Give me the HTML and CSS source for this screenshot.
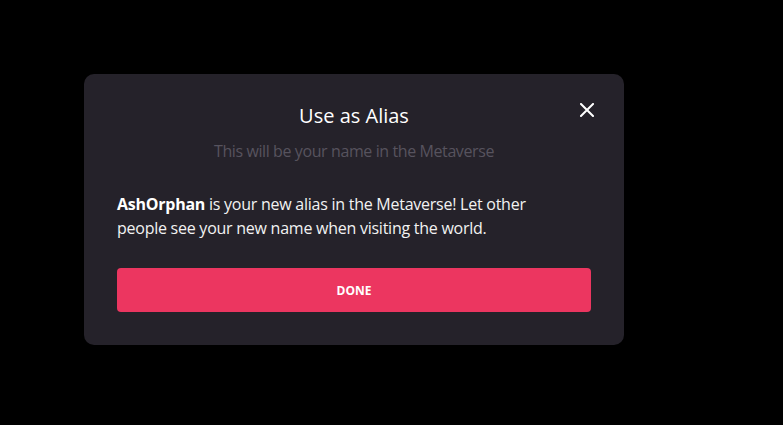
FILE: index.html
```html
<!DOCTYPE html>
<html lang="en">
<head>
  <meta charset="UTF-8">
  <meta name="viewport" content="width=device-width, initial-scale=1.0">
  <title>Use as Alias</title>
  <link rel="stylesheet" href="styles.css">
</head>
<body>
  <div class="modal">
    <button class="close" aria-label="Close">
      <svg width="14" height="14" viewBox="0 0 14 14">
        <path d="M1 1L13 13M13 1L1 13" stroke="#fff" stroke-width="2" stroke-linecap="square"/>
      </svg>
    </button>
    <div class="modal-header">
      <h2 class="title">Use as Alias</h2>
      <p class="subtitle">This will be your name in the Metaverse</p>
    </div>
    <p class="message"><strong>AshOrphan</strong> is your new alias in the Metaverse! Let other people see your new name when visiting the world.</p>
    <button class="button">DONE</button>
  </div>
</body>
</html>
```

FILE: styles.css
```css
html, body {
  background: #000;
}
body {
  margin: 0;
  font-family: 'Open Sans', 'Noto Sans', sans-serif;
  color: #fff;
}
.modal {
  position: relative;
  box-sizing: border-box;
  width: 540px;
  margin: 74px 0 0 84px;
  padding: 28px 33px 33px;
  background: #25222a;
  border-radius: 10px;
}
.close {
  position: absolute;
  top: 29px;
  right: 30px;
  width: 14px;
  height: 14px;
  padding: 0;
  border: none;
  background: none;
  cursor: pointer;
  display: flex;
}
.modal-header {
  text-align: center;
}
.title {
  margin: 0;
  font-size: 20px;
  line-height: 28px;
  font-weight: 400;
}
.subtitle {
  margin: 9px 0 0;
  font-size: 16px;
  line-height: 24px;
  letter-spacing: -0.4px;
  color: #57535e;
}
.message {
  max-width: 430px;
  margin: 29px 0 0;
  font-size: 16px;
  line-height: 24px;
  letter-spacing: -0.25px;
  color: #f2f2f2;
}
.message strong {
  color: #fff;
  font-weight: 700;
}
.button {
  display: block;
  width: 100%;
  height: 44px;
  margin-top: 28px;
  border: none;
  border-radius: 4px;
  background: #ec3660;
  color: #fff;
  font-family: inherit;
  font-size: 12px;
  font-weight: 700;
  cursor: pointer;
}
```
